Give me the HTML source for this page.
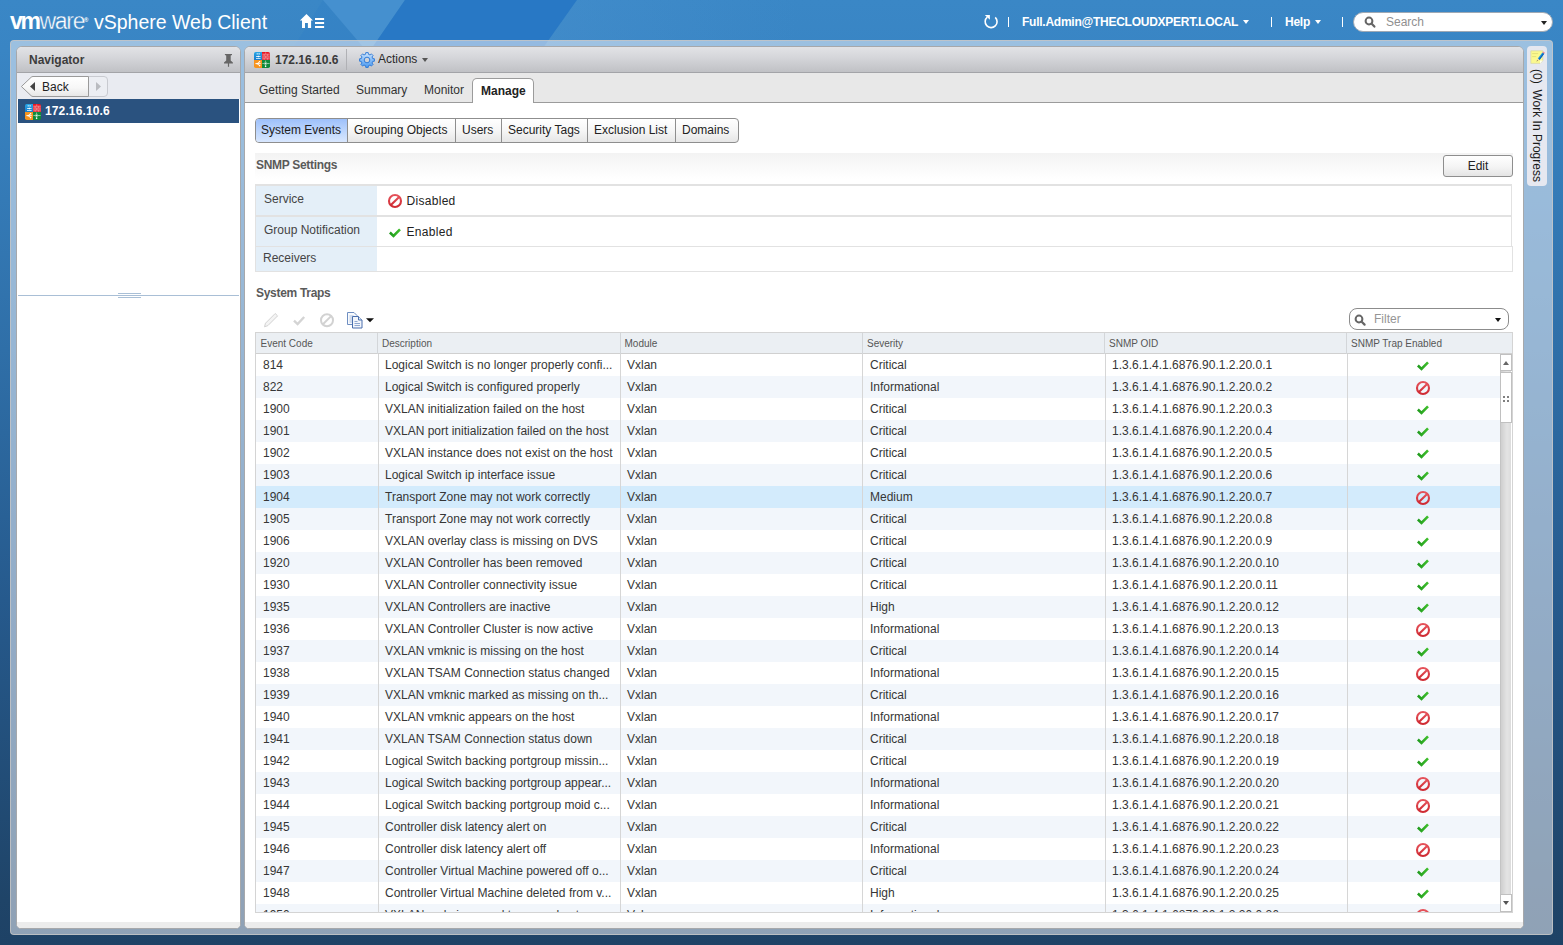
<!DOCTYPE html>
<html>
<head>
<meta charset="utf-8">
<title>vSphere Web Client</title>
<style>
*{box-sizing:border-box;margin:0;padding:0}
html,body{width:1563px;height:945px;overflow:hidden}
body{font-family:"Liberation Sans",Arial,sans-serif;font-size:12px;color:#333;position:relative;
 background:linear-gradient(to bottom,#3a87c6 0px,#3985c4 50px,#2f6fa8 350px,#265a8d 600px,#1f4468 900px,#1e4266 945px);}
.a{position:absolute;white-space:nowrap}
svg{display:block;overflow:visible}
/* ---------- top bar ---------- */
#hdrbg{left:0;top:0;width:1563px;height:48px}
.lg{color:#fff;line-height:28px;height:28px}
#lg1{left:10px;top:7px;font-size:23px}
#lg1 b{font-weight:bold;letter-spacing:-2.2px}
#lg1 span{letter-spacing:-1.3px;-webkit-text-stroke:.4px #3a86c5;margin-left:.7px}
#lg3{left:84px;top:6px;font-size:6px;font-weight:bold}
#lg4{left:94px;top:8px;font-size:19.5px}
.tb{color:#fff;font-weight:bold;font-size:12px;height:14px;line-height:14px;top:15px;letter-spacing:-.25px}
.sep{background:#fff;width:1px;height:10px;top:17px}
.dd{width:0;height:0;border-left:3.750px solid transparent;border-right:3.750px solid transparent;border-top:4px solid #fff}
#search{left:1353px;top:12px;width:200px;height:20px;border-radius:10px;background:#fff;border:1px solid #9fa9b4}
#search span{left:32px;top:2px;color:#909090;font-size:12px;line-height:14px}
/* ---------- frame & panels ---------- */
#frame{left:10px;top:40px;width:1543px;height:895px;background:rgba(236,240,247,.55);border-radius:4px;border:1px solid rgba(198,198,198,.8)}
.panel{background:#fff;border:1px solid #a6a8ab;border-radius:6px 6px 5px 5px;overflow:hidden}
.phead{left:0;top:0;right:0;height:26px;background:linear-gradient(to bottom,#e2e3e6 0%,#d4d5d9 45%,#c0c1c5 100%);border-bottom:1px solid #a3a4a8}
.pfoot{left:0;right:0;bottom:0;height:6px;background:#ececec}
#nav{left:16px;top:46px;width:225px;height:883px}
#main{left:244px;top:46px;width:1280px;height:883px}
#wip{left:1527px;top:46px;width:20px;height:140px;background:#e6e8f0;border-radius:4px}
#wip span{left:3px;top:23px;writing-mode:vertical-rl;font-size:12px;color:#1a1a1a;line-height:14px}
/* nav */
#navsub{left:17px;top:73px;width:223px;height:26px;background:#e9ebf1}
#navsel{left:18px;top:99px;width:221px;height:24px;background:#2a527f}
#navsel span{left:27px;top:5px;color:#fff;font-weight:bold;line-height:14px;letter-spacing:.12px}
#navsplit{left:18px;top:295px;width:221px;height:1px;background:#a9bfd6}
/* main */
#tabbar{left:245px;top:73px;width:1278px;height:30px;background:#e8e8e8;border-bottom:1px solid #9b9b9b}
.tab{top:83px;line-height:14px;color:#333}
#tabsel{left:472px;top:78px;width:62px;height:25px;background:#fff;border:1px solid #9b9b9b;border-bottom:none;border-radius:5px 5px 0 0}
#tabsel span{left:8px;top:5px;font-weight:bold;line-height:14px;color:#222}
#btnbar{left:255px;top:118px;height:25px;border:1px solid #8e8e8e;border-radius:4px;background:linear-gradient(to bottom,#fff 0%,#f6f6f6 50%,#e6e6e6 100%);overflow:hidden;display:flex}
#btnbar div{height:23px;line-height:22px;padding:0 0 0 6px;border-left:1px solid #8e8e8e;color:#222;white-space:nowrap}
#btnbar div:first-child{border-left:none;padding-left:5px;background:linear-gradient(to bottom,#9dc0fb 0%,#bcd5fd 50%,#d8e7fe 100%)}
.sech{font-weight:bold;color:#5a5a5a;line-height:14px;letter-spacing:-.3px}
#snmph{left:255px;top:153px;width:1258px;height:26px;background:linear-gradient(to bottom,#f3f3f3,#fff)}
#edit{left:1443px;top:155px;width:70px;height:22px;border:1px solid #8e8e8e;border-radius:3px;background:linear-gradient(to bottom,#fff 0%,#f4f4f4 55%,#e4e4e4 100%);text-align:center;line-height:20px;color:#222}
.kv{left:255px;width:1257px;border:1px solid #e2e2e2;border-top-width:2px;background:#fff}
.kv .k{left:0;top:0;bottom:0;width:121px;background:#e4eff8}
.kv .k span{left:8px;line-height:14px;color:#444}
.kv .v{left:150.5px;line-height:14px;color:#222;letter-spacing:.3px}
/* filter */
#filter{left:1349px;top:308px;width:160px;height:22px;border:1px solid #8c8c8c;border-radius:8px;background:#fff}
#filter span{left:24px;top:3px;color:#959595;line-height:14px}
/* grid */
#grid{left:255px;top:332px;width:1258px;height:581px;border:1px solid #d4d4d4;background:#fff;overflow:hidden}
#ghead{left:0;top:0;width:1256px;height:21px;background:#ebeff3;border-bottom:1px solid #d0d0d0}
#ghead span{position:absolute;top:5px;font-size:10px;line-height:12px;color:#565656}
#ghead i{position:absolute;top:0;width:1px;height:21px;background:#d3d6d9}
#gbody{left:0;top:21px;width:1244px;height:558px;overflow:hidden}
.r{position:absolute;left:0;width:1244px;height:22px;line-height:22px;background:#fff;white-space:nowrap}
.r.odd{background:#f2f6fb}
.r.sel{background:#d3ebfc}
.c{position:absolute;top:0;color:#363636}
.c1{left:7px}.c2{left:129px}.c3{left:371px}.c4{left:614px}.c5{left:856px}
.ic{position:absolute}
.ck{left:1160px;top:4.8px;width:14px;height:14px}
.no{left:1159px;top:4px;width:16px;height:16px}
.vl{top:21px;width:1px;height:558px;background:#d6d6d6}
#sb{left:1244px;top:21px;width:11px;height:558px;background:linear-gradient(to right,#cfcfcf,#e4e4e4 60%,#dcdcdc);border-left:1px solid #c4c4c4}
</style>
</head>
<body>
<svg width="0" height="0" style="position:absolute">
 <defs>
  <linearGradient id="g-grn" x1="0" y1="0" x2="1" y2="0"><stop offset="0" stop-color="#1f9a1c"/><stop offset="1" stop-color="#3fbf2c"/></linearGradient>
  <linearGradient id="g-red" x1="0" y1="0" x2="0" y2="1"><stop offset="0" stop-color="#e5525a"/><stop offset="1" stop-color="#cf2a32"/></linearGradient>
  <linearGradient id="g-nb" x1="0" y1="0" x2="0" y2="1"><stop offset="0" stop-color="#25a6e6"/><stop offset="1" stop-color="#1a7bcb"/></linearGradient>
  <linearGradient id="g-nr" x1="0" y1="0" x2="0" y2="1"><stop offset="0" stop-color="#e8101c"/><stop offset="1" stop-color="#e23a46"/></linearGradient>
  <g id="i-check"><path d="M1.900 6.500 L5.500 9.900 L12 3.300" fill="none" stroke="url(#g-grn)" stroke-width="2.600" stroke-linejoin="miter"/></g>
  <g id="i-no"><circle cx="8" cy="8" r="6" fill="none" stroke="url(#g-red)" stroke-width="2.1"/><path d="M3.9 12.1 L12.1 3.9" stroke="url(#g-red)" stroke-width="2.1"/></g>
  <g id="i-nsx">
   <path d="M1.800 0H8V8H0V1.800Q0 0 1.800 0Z" fill="url(#g-nb)"/>
   <path d="M8 0H14.200Q16 0 16 1.800V8H8Z" fill="url(#g-nr)"/>
   <path d="M0 8H8V16H1.800Q0 16 0 14.200Z" fill="#f7931d"/>
   <path d="M8 8H16V14.200Q16 16 14.200 16H8Z" fill="#0f8a3b"/>
   <path d="M2.600 1.300h1.300v1.100h-1.300zM4.400 1.300h1.500v1.100h-1.500z" fill="#c9e8f8"/>
   <path d="M2 4.500h4.600M2 6.500h4.600" stroke="#e9f6fd" stroke-width=".8"/>
   <path d="M3.300 4.500l1-0.900 1 .9-1 .9z" fill="#fff"/>
   <path d="M8.300 2.200h7.400M8.300 4.100h7.400M8.300 6h7.400" stroke="#fbd3d6" stroke-width=".55"/>
   <path d="M11.700 .3v1.900M10.200 2.200v1.900M13.600 2.200v1.900M11.700 4.100v1.900M10.200 6v1.800M13.600 6v1.800" stroke="#f7b6bb" stroke-width=".5"/>
   <path d="M1.400 11.600h4.800M5.500 9.700L3.400 11.600L5.500 13.600" stroke="#fff" stroke-width=".9" fill="none"/>
   <circle cx="5.600" cy="9.700" r=".8" fill="#fff"/><circle cx="5.600" cy="13.600" r=".8" fill="#fff"/><circle cx="6.200" cy="11.600" r=".7" fill="#fde6cb"/><circle cx="3.300" cy="11.600" r=".9" fill="#fff"/>
   <path d="M11.600 8.500v6.600M8.400 11.500h7.200" stroke="#d4f0de" stroke-width=".6"/>
   <path d="M10.400 10.300l2.400 2.400M12.800 10.300l-2.400 2.400" stroke="#a9dcbc" stroke-width=".6"/>
   <circle cx="11.600" cy="14.300" r=".8" fill="#fff"/><circle cx="11.600" cy="11.500" r=".6" fill="#eafaf0"/>
  </g>
 </defs>
</svg>

<!-- header decoration -->
<svg id="hdrbg" class="a" viewBox="0 0 1563 48">
 <polygon points="323,0 293,48 364,48" fill="#2f7ec6" opacity=".3"/>
 <polygon points="323,0 405,0 372,48 364,48" fill="#4892d0" opacity=".85"/>
 <polygon points="405,0 577,0 543,48 372,48" fill="#2878c5"/>
 <defs><linearGradient id="g-hf" x1="0" y1="0" x2="1" y2="0"><stop offset="0" stop-color="#4a92d0" stop-opacity=".4"/><stop offset="1" stop-color="#4a92d0" stop-opacity="0"/></linearGradient></defs><polygon points="577,0 800,0 800,48 543,48" fill="url(#g-hf)"/>
</svg>

<span id="lg1" class="a lg"><b>vm</b><span>ware</span></span><span id="lg3" class="a lg">&#174;</span><span id="lg4" class="a lg">vSphere Web Client</span>
<svg class="a" style="left:300px;top:14px" width="25" height="15" viewBox="0 0 25 15">
 <path d="M6.500 0 L13 6.550 H11.100 V14.100 H7.900 V9.100 H5 V14.100 H2 V6.550 H-.1 Z" fill="#fff"/>
 <rect x="15" y="4" width="9.100" height="2" fill="#fff"/><rect x="15" y="8" width="9.100" height="2" fill="#fff"/><rect x="15" y="12" width="9.100" height="2" fill="#fff"/>
</svg>

<svg class="a" style="left:983px;top:14px" width="16" height="15" viewBox="0 0 16 15">
 <path d="M4.280 3.100 A5.950 5.950 0 1 0 12.240 3.360" fill="none" stroke="#fff" stroke-width="1.600"/>
 <path d="M1.800 1 L6.900 1 L6.900 5.800 Z" fill="#fff"/>
</svg>
<div class="a sep" style="left:1008px"></div>
<div class="a tb" style="left:1022px">Full.Admin@THECLOUDXPERT.LOCAL</div>
<div class="a dd" style="left:1243px;top:20px"></div>
<div class="a sep" style="left:1271px"></div>
<div class="a tb" style="left:1285px">Help</div>
<div class="a dd" style="left:1315px;top:20px"></div>
<div class="a sep" style="left:1342px"></div>
<div id="search" class="a">
 <svg class="a" style="left:9.500px;top:3px" width="13" height="13" viewBox="0 0 13 13"><circle cx="5" cy="5" r="3.400" fill="none" stroke="#666" stroke-width="2"/><path d="M7.700 7.700 L10.400 10.600" stroke="#666" stroke-width="2.200" stroke-linecap="round"/></svg>
 <span class="a">Search</span>
 <div class="a dd" style="left:187px;top:8px;border-top-color:#222"></div>
</div>

<div id="frame" class="a"></div>

<!-- navigator -->
<div id="nav" class="a panel">
  <div class="a phead"><span class="a" style="left:12px;top:6px;font-weight:bold;line-height:14px;color:#3c3c3c">Navigator</span>
   <svg class="a" style="left:206px;top:7px" width="11" height="14" viewBox="0 0 11 14"><path d="M1.900 0 H9 V1.100 L7.700 1.600 V6.600 L9.900 8.400 V9.500 H6.100 V12.400 L5.500 13 L4.900 12.400 V9.500 H1 V8.400 L3.200 6.600 V1.600 L1.900 1.100 Z" fill="#666"/></svg>
  </div>
  <div class="a pfoot"></div>
</div>
<div id="navsub" class="a"></div>
<svg class="a" style="left:20px;top:76px" width="90" height="22" viewBox="0 0 90 22">
 <defs><linearGradient id="g-bk" x1="0" y1="0" x2="0" y2="1"><stop offset="0" stop-color="#ffffff"/><stop offset=".55" stop-color="#f7f7f7"/><stop offset="1" stop-color="#e6e6e6"/></linearGradient></defs>
 <path d="M68.5 .5 H84 Q87.5 .5 87.5 4 V17 Q87.5 20.500 84 20.500 H68.500 Z" fill="#eceef3" stroke="#c8cad0"/>
 <path d="M13 .5 H68.500 V20.500 H13 Q11.800 20.500 11 19.600 L1.400 10.500 L11 1.400 Q11.800 .5 13 .5 Z" fill="url(#g-bk)" stroke="#9a9a9a"/>
 <path d="M15 6 V15 L10 10.500 Z" fill="#444"/>
 <path d="M76 6 V15 L81 10.500 Z" fill="#b9bbc0"/>
</svg>
<span class="a" style="left:42px;top:80px;line-height:14px;color:#222">Back</span>
<div id="navsel" class="a"><svg class="a" style="left:7px;top:5px" width="16" height="16" viewBox="0 0 16 16"><use href="#i-nsx"/></svg><span class="a">172.16.10.6</span></div>
<div id="navsplit" class="a"></div>
<div class="a" style="left:118px;top:293px;width:23px;height:1px;background:#a9bfd6"></div>
<div class="a" style="left:118px;top:297px;width:23px;height:1px;background:#a9bfd6"></div>

<!-- main -->
<div id="main" class="a panel">
  <div class="a phead"></div>
  <div class="a pfoot"></div>
</div>
<svg class="a" style="left:254px;top:52px" width="16" height="16" viewBox="0 0 16 16"><use href="#i-nsx"/></svg>
<span class="a" style="left:275px;top:53px;font-weight:bold;line-height:14px;color:#3a3a3a">172.16.10.6</span>
<div class="a" style="left:346px;top:49px;width:1px;height:21px;background:#b0b1b5"></div>
<svg class="a" style="left:359px;top:52px" width="16" height="16" viewBox="0 0 16 16">
 <defs><linearGradient id="g-gear" x1="0" y1="0" x2="0" y2="1"><stop offset="0" stop-color="#d9ebfd"/><stop offset=".45" stop-color="#8cc0f8"/><stop offset="1" stop-color="#4f9cf0"/></linearGradient></defs>
 <path d="M6.62 2.26 L6.77 0.60 L9.23 0.60 L9.38 2.26 L11.08 2.97 L12.36 1.90 L14.10 3.64 L13.03 4.92 L13.74 6.62 L15.40 6.77 L15.40 9.23 L13.74 9.38 L13.03 11.08 L14.10 12.36 L12.36 14.10 L11.08 13.03 L9.38 13.74 L9.23 15.40 L6.77 15.40 L6.62 13.74 L4.92 13.03 L3.64 14.10 L1.90 12.36 L2.97 11.08 L2.26 9.38 L0.60 9.23 L0.60 6.77 L2.26 6.62 L2.97 4.92 L1.90 3.64 L3.64 1.90 L4.92 2.97Z M10.800 8 A2.800 2.800 0 1 0 5.200 8 A2.800 2.800 0 1 0 10.800 8Z" fill="url(#g-gear)" fill-rule="evenodd" stroke="#2674d6" stroke-width=".9" stroke-linejoin="round"/>
</svg>
<span class="a" style="left:378px;top:52px;line-height:14px;color:#2a2a2a">Actions</span>
<div class="a dd" style="left:422px;top:58px;border-top-color:#555"></div>

<div id="tabbar" class="a"></div>
<span class="a tab" style="left:259px">Getting Started</span>
<span class="a tab" style="left:356px">Summary</span>
<span class="a tab" style="left:424px">Monitor</span>
<div id="tabsel" class="a"><span class="a">Manage</span></div>

<div id="btnbar" class="a"><div style="width:91px">System Events</div><div style="width:108px">Grouping Objects</div><div style="width:46px">Users</div><div style="width:86px">Security Tags</div><div style="width:88px">Exclusion List</div><div style="width:63px">Domains</div></div>

<div id="snmph" class="a"></div>
<span class="a sech" style="left:256px;top:158px">SNMP Settings</span>
<div id="edit" class="a">Edit</div>

<div class="a kv" style="top:184px;height:32px"><div class="a k"><span class="a" style="top:6px">Service</span></div>
 <svg class="a" style="left:131px;top:7px" width="16" height="16" viewBox="0 0 16 16"><use href="#i-no"/></svg><span class="a v" style="top:8px">Disabled</span></div>
<div class="a kv" style="top:215px;height:32px"><div class="a k"><span class="a" style="top:6px">Group Notification</span></div>
 <svg class="a" style="left:132px;top:8.5px" width="14" height="14" viewBox="0 0 14 14"><use href="#i-check"/></svg><span class="a v" style="top:8px">Enabled</span></div>
<div class="a kv" style="top:246px;height:26px;width:1258px;border-top-width:1px"><div class="a k"><span class="a" style="top:4px;left:7px">Receivers</span></div></div>

<span class="a sech" style="left:256px;top:286px">System Traps</span>

<!-- toolbar icons -->
<svg class="a" style="left:263px;top:312px" width="112" height="17" viewBox="0 0 112 17">
 <path d="M1.500 14.800 L2.500 11.200 L12.200 1.500 L14.600 3.900 L4.900 13.600 Z" fill="#f4f4f4" stroke="#d2d2d2" stroke-width="1"/>
 <path d="M31 8.600 L34.600 12 L41.200 5" fill="none" stroke="#d4d4d4" stroke-width="2.400"/>
 <circle cx="64" cy="8.200" r="6" fill="none" stroke="#d2d2d2" stroke-width="2"/><path d="M59.900 12.300 L68.100 4.100" stroke="#d2d2d2" stroke-width="2"/>
 <path d="M84.500 .5 h6.500 l3 3 v9 h-9.500z" fill="#f8fafd" stroke="#6f8fc2"/>
 <path d="M86.500 4h4M86.500 6h3M86.500 8h3M86.500 10h3" stroke="#a9bddc" stroke-width="1"/>
 <path d="M89.500 4.500 h6 l3.500 3.500 v8 h-9.500z" fill="#f3f6fb" stroke="#4a6fad"/>
 <path d="M95.500 4.500 v3.500 h3.500" fill="#dfe8f5" stroke="#4a6fad"/>
 <path d="M91.500 9.500h3M91.500 11.500h5.500M91.500 13.500h5.500" stroke="#8fa8d0" stroke-width="1"/>
 <path d="M103 6.200 h8 l-4 4z" fill="#111"/>
</svg>

<div id="filter" class="a">
 <svg class="a" style="left:4px;top:5px" width="13" height="13" viewBox="0 0 13 13"><circle cx="5" cy="5" r="3.400" fill="none" stroke="#666" stroke-width="2"/><path d="M7.700 7.700 L10.600 10.600" stroke="#666" stroke-width="2.200" stroke-linecap="round"/></svg>
 <span class="a">Filter</span>
 <div class="a dd" style="left:145px;top:9px;border-top-color:#111"></div>
</div>

<div id="grid" class="a">
 <div id="ghead" class="a">
  <span style="left:4.5px">Event Code</span><span style="left:126px">Description</span><span style="left:368.5px">Module</span><span style="left:611px">Severity</span><span style="left:853px">SNMP OID</span><span style="left:1095px">SNMP Trap Enabled</span>
  <i style="left:121px"></i><i style="left:364px"></i><i style="left:606px"></i><i style="left:848px"></i><i style="left:1090px"></i>
 </div>
 <div id="gbody" class="a">
<div class="r" style="top:0px"><span class="c c1">814</span><span class="c c2">Logical Switch is no longer properly confi...</span><span class="c c3">Vxlan</span><span class="c c4">Critical</span><span class="c c5">1.3.6.1.4.1.6876.90.1.2.20.0.1</span><svg class="ic ck" viewBox="0 0 14 14"><use href="#i-check"/></svg></div>
<div class="r odd" style="top:22px"><span class="c c1">822</span><span class="c c2">Logical Switch is configured properly</span><span class="c c3">Vxlan</span><span class="c c4">Informational</span><span class="c c5">1.3.6.1.4.1.6876.90.1.2.20.0.2</span><svg class="ic no" viewBox="0 0 16 16"><use href="#i-no"/></svg></div>
<div class="r" style="top:44px"><span class="c c1">1900</span><span class="c c2">VXLAN initialization failed on the host</span><span class="c c3">Vxlan</span><span class="c c4">Critical</span><span class="c c5">1.3.6.1.4.1.6876.90.1.2.20.0.3</span><svg class="ic ck" viewBox="0 0 14 14"><use href="#i-check"/></svg></div>
<div class="r odd" style="top:66px"><span class="c c1">1901</span><span class="c c2">VXLAN port initialization failed on the host</span><span class="c c3">Vxlan</span><span class="c c4">Critical</span><span class="c c5">1.3.6.1.4.1.6876.90.1.2.20.0.4</span><svg class="ic ck" viewBox="0 0 14 14"><use href="#i-check"/></svg></div>
<div class="r" style="top:88px"><span class="c c1">1902</span><span class="c c2">VXLAN instance does not exist on the host</span><span class="c c3">Vxlan</span><span class="c c4">Critical</span><span class="c c5">1.3.6.1.4.1.6876.90.1.2.20.0.5</span><svg class="ic ck" viewBox="0 0 14 14"><use href="#i-check"/></svg></div>
<div class="r odd" style="top:110px"><span class="c c1">1903</span><span class="c c2">Logical Switch ip interface issue</span><span class="c c3">Vxlan</span><span class="c c4">Critical</span><span class="c c5">1.3.6.1.4.1.6876.90.1.2.20.0.6</span><svg class="ic ck" viewBox="0 0 14 14"><use href="#i-check"/></svg></div>
<div class="r sel" style="top:132px"><span class="c c1">1904</span><span class="c c2">Transport Zone may not work correctly</span><span class="c c3">Vxlan</span><span class="c c4">Medium</span><span class="c c5">1.3.6.1.4.1.6876.90.1.2.20.0.7</span><svg class="ic no" viewBox="0 0 16 16"><use href="#i-no"/></svg></div>
<div class="r odd" style="top:154px"><span class="c c1">1905</span><span class="c c2">Transport Zone may not work correctly</span><span class="c c3">Vxlan</span><span class="c c4">Critical</span><span class="c c5">1.3.6.1.4.1.6876.90.1.2.20.0.8</span><svg class="ic ck" viewBox="0 0 14 14"><use href="#i-check"/></svg></div>
<div class="r" style="top:176px"><span class="c c1">1906</span><span class="c c2">VXLAN overlay class is missing on DVS</span><span class="c c3">Vxlan</span><span class="c c4">Critical</span><span class="c c5">1.3.6.1.4.1.6876.90.1.2.20.0.9</span><svg class="ic ck" viewBox="0 0 14 14"><use href="#i-check"/></svg></div>
<div class="r odd" style="top:198px"><span class="c c1">1920</span><span class="c c2">VXLAN Controller has been removed</span><span class="c c3">Vxlan</span><span class="c c4">Critical</span><span class="c c5">1.3.6.1.4.1.6876.90.1.2.20.0.10</span><svg class="ic ck" viewBox="0 0 14 14"><use href="#i-check"/></svg></div>
<div class="r" style="top:220px"><span class="c c1">1930</span><span class="c c2">VXLAN Controller connectivity issue</span><span class="c c3">Vxlan</span><span class="c c4">Critical</span><span class="c c5">1.3.6.1.4.1.6876.90.1.2.20.0.11</span><svg class="ic ck" viewBox="0 0 14 14"><use href="#i-check"/></svg></div>
<div class="r odd" style="top:242px"><span class="c c1">1935</span><span class="c c2">VXLAN Controllers are inactive</span><span class="c c3">Vxlan</span><span class="c c4">High</span><span class="c c5">1.3.6.1.4.1.6876.90.1.2.20.0.12</span><svg class="ic ck" viewBox="0 0 14 14"><use href="#i-check"/></svg></div>
<div class="r" style="top:264px"><span class="c c1">1936</span><span class="c c2">VXLAN Controller Cluster is now active</span><span class="c c3">Vxlan</span><span class="c c4">Informational</span><span class="c c5">1.3.6.1.4.1.6876.90.1.2.20.0.13</span><svg class="ic no" viewBox="0 0 16 16"><use href="#i-no"/></svg></div>
<div class="r odd" style="top:286px"><span class="c c1">1937</span><span class="c c2">VXLAN vmknic is missing on the host</span><span class="c c3">Vxlan</span><span class="c c4">Critical</span><span class="c c5">1.3.6.1.4.1.6876.90.1.2.20.0.14</span><svg class="ic ck" viewBox="0 0 14 14"><use href="#i-check"/></svg></div>
<div class="r" style="top:308px"><span class="c c1">1938</span><span class="c c2">VXLAN TSAM Connection status changed</span><span class="c c3">Vxlan</span><span class="c c4">Informational</span><span class="c c5">1.3.6.1.4.1.6876.90.1.2.20.0.15</span><svg class="ic no" viewBox="0 0 16 16"><use href="#i-no"/></svg></div>
<div class="r odd" style="top:330px"><span class="c c1">1939</span><span class="c c2">VXLAN vmknic marked as missing on th...</span><span class="c c3">Vxlan</span><span class="c c4">Critical</span><span class="c c5">1.3.6.1.4.1.6876.90.1.2.20.0.16</span><svg class="ic ck" viewBox="0 0 14 14"><use href="#i-check"/></svg></div>
<div class="r" style="top:352px"><span class="c c1">1940</span><span class="c c2">VXLAN vmknic appears on the host</span><span class="c c3">Vxlan</span><span class="c c4">Informational</span><span class="c c5">1.3.6.1.4.1.6876.90.1.2.20.0.17</span><svg class="ic no" viewBox="0 0 16 16"><use href="#i-no"/></svg></div>
<div class="r odd" style="top:374px"><span class="c c1">1941</span><span class="c c2">VXLAN TSAM Connection status down</span><span class="c c3">Vxlan</span><span class="c c4">Critical</span><span class="c c5">1.3.6.1.4.1.6876.90.1.2.20.0.18</span><svg class="ic ck" viewBox="0 0 14 14"><use href="#i-check"/></svg></div>
<div class="r" style="top:396px"><span class="c c1">1942</span><span class="c c2">Logical Switch backing portgroup missin...</span><span class="c c3">Vxlan</span><span class="c c4">Critical</span><span class="c c5">1.3.6.1.4.1.6876.90.1.2.20.0.19</span><svg class="ic ck" viewBox="0 0 14 14"><use href="#i-check"/></svg></div>
<div class="r odd" style="top:418px"><span class="c c1">1943</span><span class="c c2">Logical Switch backing portgroup appear...</span><span class="c c3">Vxlan</span><span class="c c4">Informational</span><span class="c c5">1.3.6.1.4.1.6876.90.1.2.20.0.20</span><svg class="ic no" viewBox="0 0 16 16"><use href="#i-no"/></svg></div>
<div class="r" style="top:440px"><span class="c c1">1944</span><span class="c c2">Logical Switch backing portgroup moid c...</span><span class="c c3">Vxlan</span><span class="c c4">Informational</span><span class="c c5">1.3.6.1.4.1.6876.90.1.2.20.0.21</span><svg class="ic no" viewBox="0 0 16 16"><use href="#i-no"/></svg></div>
<div class="r odd" style="top:462px"><span class="c c1">1945</span><span class="c c2">Controller disk latency alert on</span><span class="c c3">Vxlan</span><span class="c c4">Critical</span><span class="c c5">1.3.6.1.4.1.6876.90.1.2.20.0.22</span><svg class="ic ck" viewBox="0 0 14 14"><use href="#i-check"/></svg></div>
<div class="r" style="top:484px"><span class="c c1">1946</span><span class="c c2">Controller disk latency alert off</span><span class="c c3">Vxlan</span><span class="c c4">Informational</span><span class="c c5">1.3.6.1.4.1.6876.90.1.2.20.0.23</span><svg class="ic no" viewBox="0 0 16 16"><use href="#i-no"/></svg></div>
<div class="r odd" style="top:506px"><span class="c c1">1947</span><span class="c c2">Controller Virtual Machine powered off o...</span><span class="c c3">Vxlan</span><span class="c c4">Critical</span><span class="c c5">1.3.6.1.4.1.6876.90.1.2.20.0.24</span><svg class="ic ck" viewBox="0 0 14 14"><use href="#i-check"/></svg></div>
<div class="r" style="top:528px"><span class="c c1">1948</span><span class="c c2">Controller Virtual Machine deleted from v...</span><span class="c c3">Vxlan</span><span class="c c4">High</span><span class="c c5">1.3.6.1.4.1.6876.90.1.2.20.0.25</span><svg class="ic ck" viewBox="0 0 14 14"><use href="#i-check"/></svg></div>
<div class="r odd" style="top:550px"><span class="c c1">1950</span><span class="c c2">VXLAN vmknic moved to a new host</span><span class="c c3">Vxlan</span><span class="c c4">Informational</span><span class="c c5">1.3.6.1.4.1.6876.90.1.2.20.0.26</span><svg class="ic no" viewBox="0 0 16 16"><use href="#i-no"/></svg></div>
 </div>
 <div class="a vl" style="left:122px"></div><div class="a vl" style="left:364px"></div><div class="a vl" style="left:606px"></div><div class="a vl" style="left:849px"></div><div class="a vl" style="left:1091px"></div>
 <div id="sb" class="a">
  <div class="a" style="left:-1px;top:0;width:12px;height:17px;background:#fff;border:1px solid #c0c0c0"><div class="a" style="left:2px;top:6px;width:0;height:0;border-left:3px solid transparent;border-right:3px solid transparent;border-bottom:4px solid #666"></div></div>
  <div class="a" style="left:-1px;top:18px;width:12px;height:51px;background:#fff;border:1px solid #c0c0c0">
   <div class="a" style="left:2px;top:23px;width:2px;height:2px;background:#808080"></div><div class="a" style="left:6px;top:23px;width:2px;height:2px;background:#808080"></div>
   <div class="a" style="left:2px;top:27px;width:2px;height:2px;background:#808080"></div><div class="a" style="left:6px;top:27px;width:2px;height:2px;background:#808080"></div>
  </div>
  <div class="a" style="left:-1px;top:540px;width:12px;height:18px;background:#fff;border:1px solid #c0c0c0"><div class="a" style="left:2px;top:6px;width:0;height:0;border-left:3px solid transparent;border-right:3px solid transparent;border-top:4px solid #555"></div></div>
 </div>
</div>

<!-- work in progress -->
<div id="wip" class="a">
 <svg class="a" style="left:3px;top:4px" width="16" height="15" viewBox="0 0 16 15">
  <path d="M.8 .8 H12.800 V10.600 L10 13.400 H.8 Z" fill="#fbf98f" stroke="#cfcfa8" stroke-width=".6"/>
  <path d="M2.200 3.600h6M2.200 6.600h4" stroke="#e4e07a" stroke-width="1"/>
  <path d="M10 13.400 V10.600 H12.800 Z" fill="#fffff2"/>
  <path d="M7.800 8.600 L12.400 2.400 L14.200 3.800 L9.600 10 Z" fill="#1c94e0"/>
  <path d="M8.700 9.300 L13.300 3.100 L14.200 3.800 L9.600 10 Z" fill="#0c62b8"/>
  <path d="M12.400 2.400 L13.200 1.400 L15 2.800 L14.200 3.800 Z" fill="#f08c96"/>
  <path d="M7.800 8.600 L9.600 10 L7.300 10.900 Z" fill="#f1d3a4"/>
  <path d="M6.200 11.300 L7.700 10.200 L7.900 10.900 Z" fill="#5a3d28"/>
 </svg>
 <span class="a">(0)<span style="display:inline-block;height:5.800px"></span>Work In Progress</span>
</div>
</body>
</html>
